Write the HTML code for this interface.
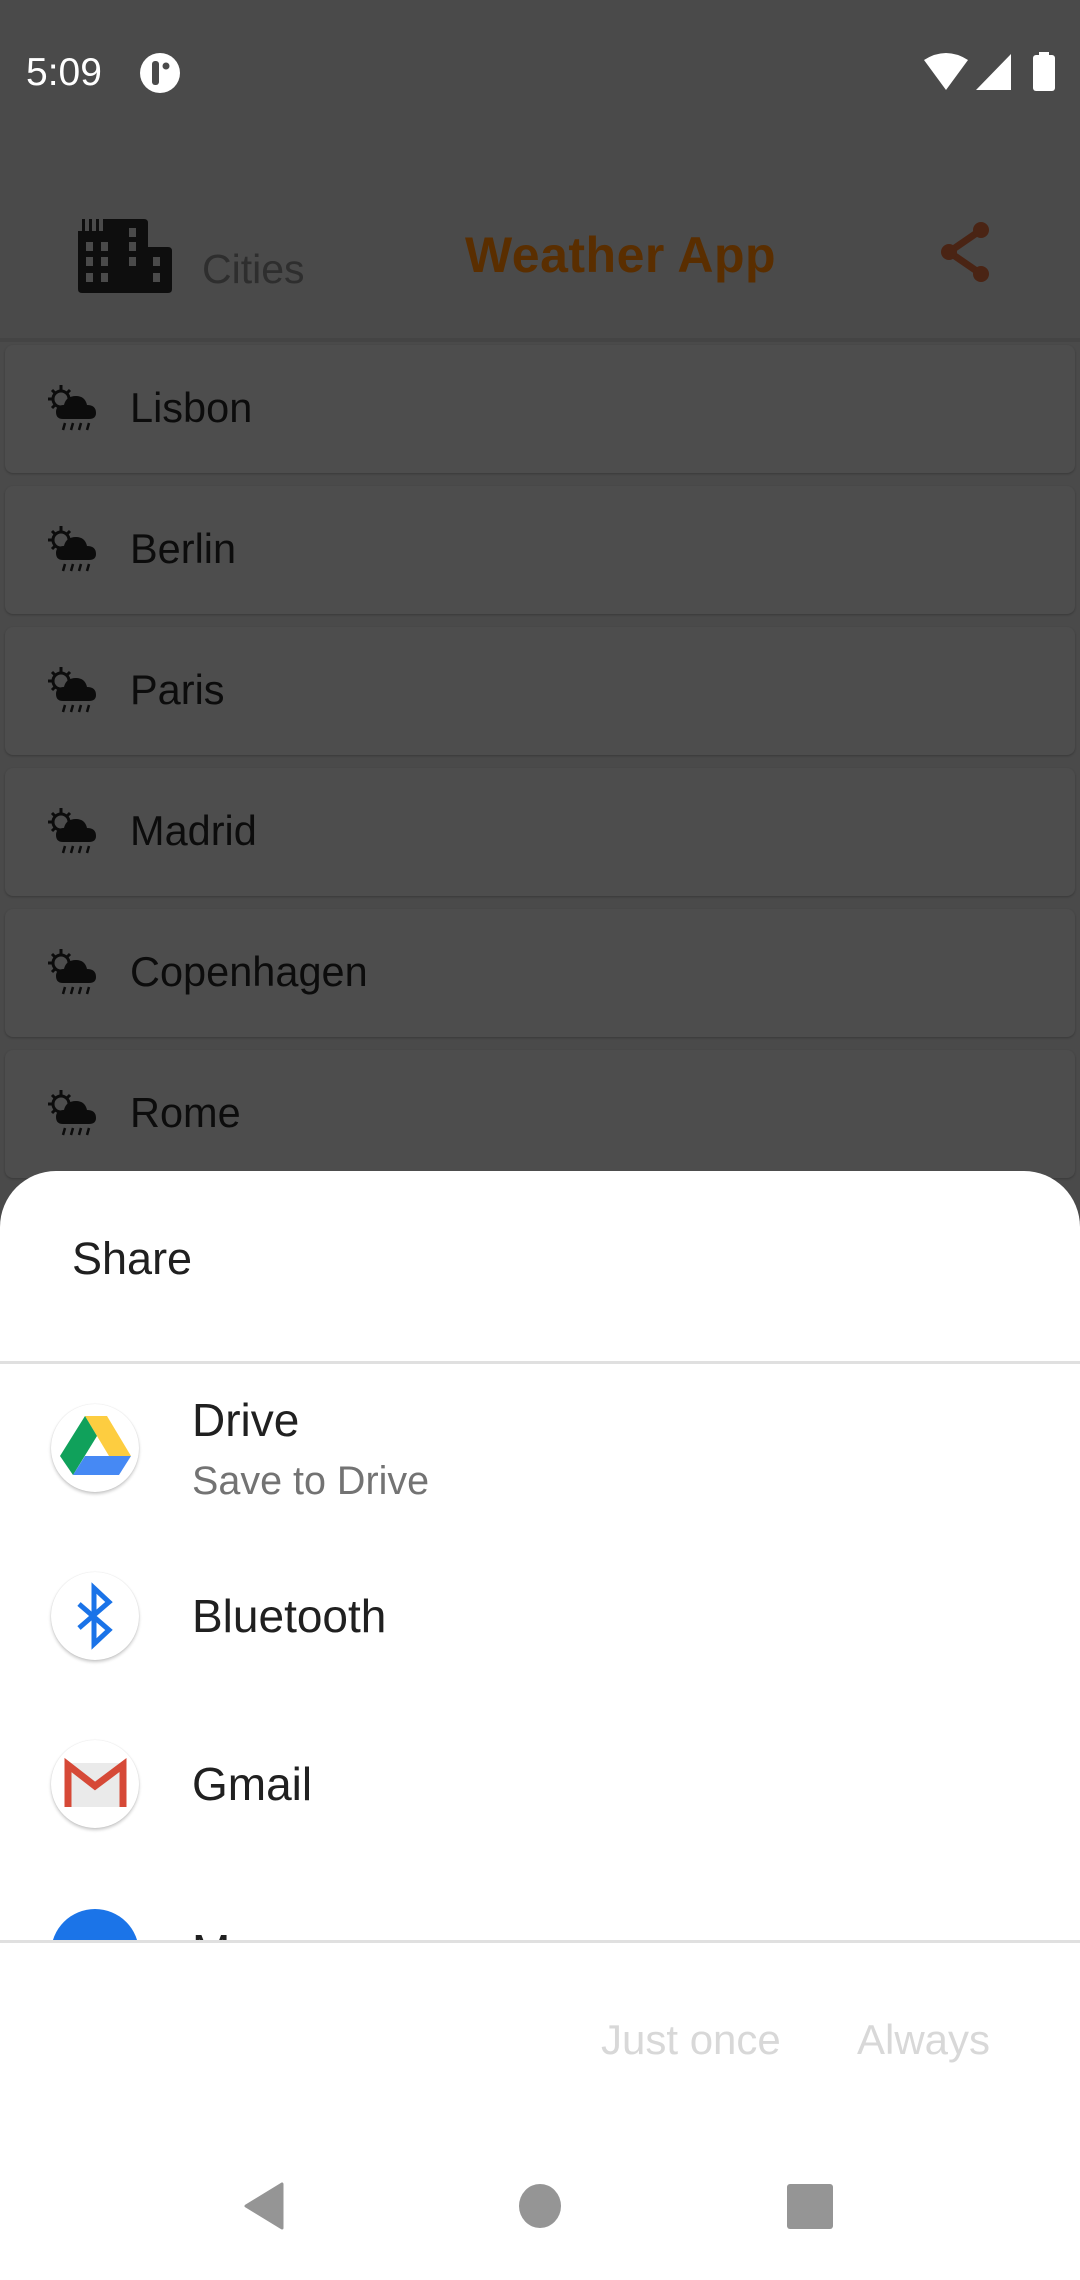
<!DOCTYPE html>
<html><head><meta charset="utf-8"><style>
*{margin:0;padding:0;box-sizing:border-box}
body{width:1080px;height:2280px;background:#4a4a4a;font-family:"Liberation Sans",sans-serif;position:relative;overflow:hidden}
.abs{position:absolute}
.card{position:absolute;left:5px;width:1070px;height:128px;background:#4d4d4d;border-radius:8px;box-shadow:0 1px 2px rgba(0,0,0,.25)}
.card .t{position:absolute;left:125px;top:39px;font-size:41.5px;color:#0c0c0c}
.card svg{position:absolute;left:43px;top:40px}
.sheet{position:absolute;left:0;top:1171px;width:1080px;height:1109px;background:#fff;border-radius:56px 56px 0 0}
.ic{position:absolute;left:51px;width:88px;height:88px;border-radius:50%;background:#fff;box-shadow:0 2px 3px rgba(0,0,0,.22),0 0 1px rgba(0,0,0,.15)}
.lbl{position:absolute;left:192px;font-size:46px;color:#202020}
</style></head><body>
<div class="abs" style="left:26px;top:51px;font-size:39px;color:#fff">5:09</div>
<svg class="abs" style="left:139px;top:52px" width="42" height="42" viewBox="0 0 42 42"><ellipse cx="21" cy="21" rx="20" ry="20" fill="#fff"/><rect x="13" y="9" width="7" height="24" rx="3" fill="#4a4a4a"/><circle cx="27" cy="14" r="3.5" fill="#4a4a4a"/></svg>
<svg class="abs" style="left:920px;top:52px" width="140" height="42" viewBox="0 0 140 42"><path d="M4 8 Q26 -6 48 8 L26 38 Z" fill="#fff"/><path d="M56 38 L91 2 L91 38 Z" fill="#fff"/><rect x="113" y="3" width="22" height="36" rx="3" fill="#fff"/><rect x="119" y="0" width="10" height="5" fill="#fff"/></svg>
<svg class="abs" style="left:78px;top:217px" width="94" height="76" viewBox="0 0 94 76"><path d="M4 14 V2 H7 V14 H11 V2 H14 V14 H18 V2 H21 V14 H25 V2 H66 Q70 2 70 6 V30 H90 Q94 30 94 34 V72 Q94 76 90 76 H4 Q0 76 0 72 V14 Z" fill="#0e0e0e"/><g fill="#4a4a4a"><rect x="8" y="25" width="7" height="9"/><rect x="23" y="25" width="7" height="9"/><rect x="8" y="40" width="7" height="9"/><rect x="23" y="40" width="7" height="9"/><rect x="8" y="56" width="7" height="9"/><rect x="23" y="56" width="7" height="9"/><rect x="51" y="11" width="7" height="9"/><rect x="51" y="25" width="7" height="9"/><rect x="51" y="40" width="7" height="9"/><rect x="75" y="40" width="7" height="9"/><rect x="75" y="56" width="7" height="9"/></g></svg>
<div class="abs" style="left:202px;top:246px;font-size:41px;color:#2e2e2e">Cities</div>
<div class="abs" style="left:465px;top:226px;font-size:50px;font-weight:bold;color:#5a2e00;letter-spacing:0.5px">Weather App</div>
<svg class="abs" style="left:935px;top:220px" width="60" height="64" viewBox="0 0 60 64"><path d="M46 10 L14 32 L46 54" stroke="#4a2414" stroke-width="7" fill="none"/><circle cx="46" cy="10" r="8" fill="#4a2414"/><circle cx="14" cy="32" r="8" fill="#4a2414"/><circle cx="46" cy="54" r="8" fill="#4a2414"/></svg>
<div class="abs" style="left:0;top:338px;width:1080px;height:4px;background:#444"></div>

<div class="card" style="top:345px"><svg width="50" height="46" viewBox="0 0 50 46"><circle cx="13" cy="14" r="8" fill="none" stroke="#0c0c0c" stroke-width="3"/><g stroke="#0c0c0c" stroke-width="3"><path d="M13 0v5M0 14h5M4 5l3 3M22 5l-3 3M4 23l3-3"/></g><path d="M15 34 Q8 34 8 27 Q8 20 16 20 Q18 11 28 11 Q37 11 39 20 Q48 20 48 28 Q48 34 41 34 Z" fill="#0c0c0c"/><g stroke="#0c0c0c" stroke-width="2.5"><path d="M17 38l-2 7M25 38l-2 7M33 38l-2 7M41 38l-2 7"/></g></svg><div class="t">Lisbon</div></div>
<div class="card" style="top:486px"><svg width="50" height="46" viewBox="0 0 50 46"><circle cx="13" cy="14" r="8" fill="none" stroke="#0c0c0c" stroke-width="3"/><g stroke="#0c0c0c" stroke-width="3"><path d="M13 0v5M0 14h5M4 5l3 3M22 5l-3 3M4 23l3-3"/></g><path d="M15 34 Q8 34 8 27 Q8 20 16 20 Q18 11 28 11 Q37 11 39 20 Q48 20 48 28 Q48 34 41 34 Z" fill="#0c0c0c"/><g stroke="#0c0c0c" stroke-width="2.5"><path d="M17 38l-2 7M25 38l-2 7M33 38l-2 7M41 38l-2 7"/></g></svg><div class="t">Berlin</div></div>
<div class="card" style="top:627px"><svg width="50" height="46" viewBox="0 0 50 46"><circle cx="13" cy="14" r="8" fill="none" stroke="#0c0c0c" stroke-width="3"/><g stroke="#0c0c0c" stroke-width="3"><path d="M13 0v5M0 14h5M4 5l3 3M22 5l-3 3M4 23l3-3"/></g><path d="M15 34 Q8 34 8 27 Q8 20 16 20 Q18 11 28 11 Q37 11 39 20 Q48 20 48 28 Q48 34 41 34 Z" fill="#0c0c0c"/><g stroke="#0c0c0c" stroke-width="2.5"><path d="M17 38l-2 7M25 38l-2 7M33 38l-2 7M41 38l-2 7"/></g></svg><div class="t">Paris</div></div>
<div class="card" style="top:768px"><svg width="50" height="46" viewBox="0 0 50 46"><circle cx="13" cy="14" r="8" fill="none" stroke="#0c0c0c" stroke-width="3"/><g stroke="#0c0c0c" stroke-width="3"><path d="M13 0v5M0 14h5M4 5l3 3M22 5l-3 3M4 23l3-3"/></g><path d="M15 34 Q8 34 8 27 Q8 20 16 20 Q18 11 28 11 Q37 11 39 20 Q48 20 48 28 Q48 34 41 34 Z" fill="#0c0c0c"/><g stroke="#0c0c0c" stroke-width="2.5"><path d="M17 38l-2 7M25 38l-2 7M33 38l-2 7M41 38l-2 7"/></g></svg><div class="t">Madrid</div></div>
<div class="card" style="top:909px"><svg width="50" height="46" viewBox="0 0 50 46"><circle cx="13" cy="14" r="8" fill="none" stroke="#0c0c0c" stroke-width="3"/><g stroke="#0c0c0c" stroke-width="3"><path d="M13 0v5M0 14h5M4 5l3 3M22 5l-3 3M4 23l3-3"/></g><path d="M15 34 Q8 34 8 27 Q8 20 16 20 Q18 11 28 11 Q37 11 39 20 Q48 20 48 28 Q48 34 41 34 Z" fill="#0c0c0c"/><g stroke="#0c0c0c" stroke-width="2.5"><path d="M17 38l-2 7M25 38l-2 7M33 38l-2 7M41 38l-2 7"/></g></svg><div class="t">Copenhagen</div></div>
<div class="card" style="top:1050px"><svg width="50" height="46" viewBox="0 0 50 46"><circle cx="13" cy="14" r="8" fill="none" stroke="#0c0c0c" stroke-width="3"/><g stroke="#0c0c0c" stroke-width="3"><path d="M13 0v5M0 14h5M4 5l3 3M22 5l-3 3M4 23l3-3"/></g><path d="M15 34 Q8 34 8 27 Q8 20 16 20 Q18 11 28 11 Q37 11 39 20 Q48 20 48 28 Q48 34 41 34 Z" fill="#0c0c0c"/><g stroke="#0c0c0c" stroke-width="2.5"><path d="M17 38l-2 7M25 38l-2 7M33 38l-2 7M41 38l-2 7"/></g></svg><div class="t">Rome</div></div>

<div class="sheet">
<div class="abs" style="left:72px;top:62px;font-size:45px;color:#202020">Share</div>
<div class="abs" style="left:0;top:190px;width:1080px;height:3px;background:#e0e0e0"></div>
<div class="ic" style="top:233px"><svg width="88" height="88" viewBox="0 0 88 88"><path d="M34 12 H56 L80 52 H58 Z" fill="#fdcd40"/><path d="M34 12 L46 32 L22 71 L9 52 Z" fill="#10a15b"/><path d="M22 71 L34 52 H80 L68 71 Z" fill="#4689f4"/></svg></div>
<div class="lbl" style="top:222px">Drive</div>
<div class="abs" style="left:192px;top:288px;font-size:39.5px;color:#737373">Save to Drive</div>
<div class="ic" style="top:401px"><svg width="88" height="88" viewBox="0 0 88 88"><path d="M28 32 L58 58 L43 72 V16 L58 30 L28 56" stroke="#1a73e8" stroke-width="5" fill="none"/></svg></div>
<div class="lbl" style="top:418px">Bluetooth</div>
<div class="ic" style="top:569px"><svg width="88" height="88" viewBox="0 0 88 88"><rect x="14" y="23" width="61" height="44" fill="#eaeaea"/><path d="M17 67 V25 L44 46 L72 25 V67" stroke="#d64937" stroke-width="7" fill="none"/></svg></div>
<div class="lbl" style="top:586px">Gmail</div>
<div class="abs" style="left:51px;top:738px;width:88px;height:88px;border-radius:50%;background:#1b74e8"></div>
<div class="abs" style="left:192px;top:753px;font-size:46px;color:#202020">M</div>
<div class="abs" style="left:0;top:769px;width:1080px;height:340px;background:#fff"></div>
<div class="abs" style="left:0;top:769px;width:1080px;height:3px;background:#e0e0e0"></div>
<div class="abs" style="left:601px;top:845px;font-size:42px;color:#d8d8d8">Just once</div>
<div class="abs" style="left:857px;top:845px;font-size:42px;color:#d8d8d8">Always</div>
</div>
<svg class="abs" style="left:240px;top:2180px" width="600" height="52" viewBox="0 0 600 52"><path d="M42 4 V48 L6 26 Z" fill="#959595" stroke="#959595" stroke-width="3" stroke-linejoin="round"/><ellipse cx="300" cy="26" rx="21" ry="22" fill="#959595"/><rect x="547" y="4" width="46" height="45" rx="3" fill="#959595"/></svg>
</body></html>
